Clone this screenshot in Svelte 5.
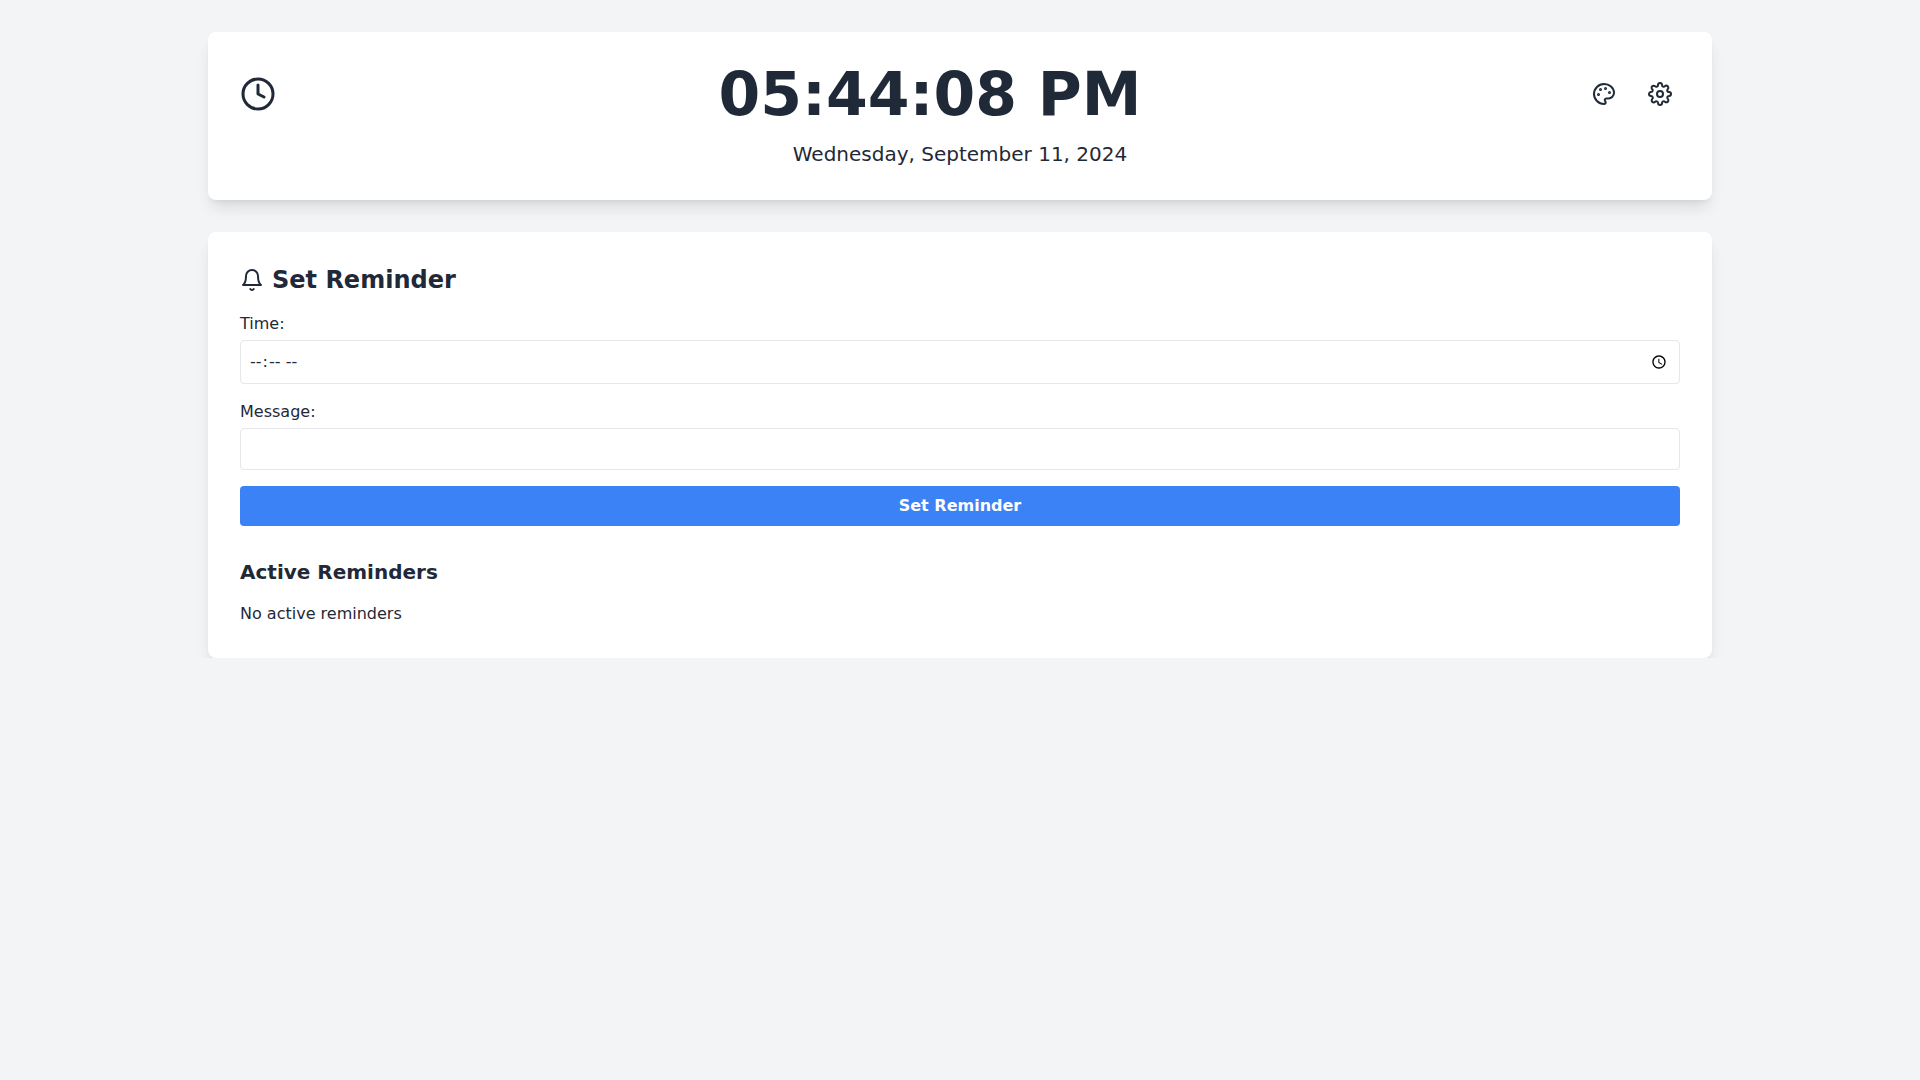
<script>
  let time = $state('');
  let message = $state('');
</script>

<div class="page">
  <section class="card">
    <div class="clock-row">
      <svg class="clock-icon" viewBox="0 0 24 24" fill="none" stroke="currentColor" stroke-width="2" stroke-linecap="round" stroke-linejoin="round"><circle cx="12" cy="12" r="10"/><polyline points="12 6 12 12 16 14"/></svg>
      <div class="time">05:44:08 PM</div>
      <div class="actions">
        <button class="icon-btn" aria-label="Theme">
          <svg viewBox="0 0 24 24" fill="none" stroke="currentColor" stroke-width="2" stroke-linecap="round" stroke-linejoin="round"><circle cx="13.5" cy="6.5" r=".5" fill="currentColor"/><circle cx="17.5" cy="10.5" r=".5" fill="currentColor"/><circle cx="8.5" cy="7.5" r=".5" fill="currentColor"/><circle cx="6.5" cy="12.5" r=".5" fill="currentColor"/><path d="M12 2C6.5 2 2 6.5 2 12s4.5 10 10 10c.926 0 1.648-.746 1.648-1.688 0-.437-.18-.835-.437-1.125-.29-.289-.438-.652-.438-1.125a1.64 1.64 0 0 1 1.668-1.668h1.996c3.051 0 5.555-2.503 5.555-5.554C21.965 6.012 17.461 2 12 2z"/></svg>
        </button>
        <button class="icon-btn" aria-label="Settings">
          <svg viewBox="0 0 24 24" fill="none" stroke="currentColor" stroke-width="2" stroke-linecap="round" stroke-linejoin="round"><circle cx="12" cy="12" r="3"/><path d="M19.4 15a1.65 1.65 0 0 0 .33 1.82l.06.06a2 2 0 0 1 0 2.83 2 2 0 0 1-2.83 0l-.06-.06a1.65 1.65 0 0 0-1.82-.33 1.65 1.65 0 0 0-1 1.51V21a2 2 0 0 1-2 2 2 2 0 0 1-2-2v-.09A1.65 1.65 0 0 0 9 19.4a1.65 1.65 0 0 0-1.82.33l-.06.06a2 2 0 0 1-2.83 0 2 2 0 0 1 0-2.83l.06-.06a1.65 1.65 0 0 0 .33-1.82 1.65 1.65 0 0 0-1.51-1H3a2 2 0 0 1-2-2 2 2 0 0 1 2-2h.09A1.65 1.65 0 0 0 4.6 9a1.65 1.65 0 0 0-.33-1.82l-.06-.06a2 2 0 0 1 0-2.83 2 2 0 0 1 2.83 0l.06.06a1.65 1.65 0 0 0 1.82.33H9a1.65 1.65 0 0 0 1-1.51V3a2 2 0 0 1 2-2 2 2 0 0 1 2 2v.09a1.65 1.65 0 0 0 1 1.51 1.65 1.65 0 0 0 1.82-.33l.06-.06a2 2 0 0 1 2.83 0 2 2 0 0 1 0 2.83l-.06.06a1.65 1.65 0 0 0-.33 1.82V9a1.65 1.65 0 0 0 1.51 1H21a2 2 0 0 1 2 2 2 2 0 0 1-2 2h-.09a1.65 1.65 0 0 0-1.51 1z"/></svg>
        </button>
      </div>
    </div>
    <p class="date">Wednesday, September 11, 2024</p>
  </section>

  <section class="card">
    <h2 class="heading">
      <svg viewBox="0 0 24 24" fill="none" stroke="currentColor" stroke-width="2" stroke-linecap="round" stroke-linejoin="round"><path d="M18 8A6 6 0 0 0 6 8c0 7-3 9-3 9h18s-3-2-3-9"/><path d="M13.73 21a2 2 0 0 1-3.46 0"/></svg>
      Set Reminder
    </h2>
    <form class="form" onsubmit={(e) => e.preventDefault()}>
      <div class="field">
        <label for="time">Time:</label>
        <input id="time" type="time" bind:value={time} />
      </div>
      <div class="field">
        <label for="message">Message:</label>
        <input id="message" type="text" bind:value={message} />
      </div>
      <button class="submit" type="submit">Set Reminder</button>
    </form>
    <h3 class="subheading">Active Reminders</h3>
    <p class="empty">No active reminders</p>
  </section>
</div>

<style>
  :global(body) {
    background: #f3f4f6;
    color: #1f2937;
    font-family: "DejaVu Sans", sans-serif;
    line-height: 1.5;
  }
  .page {
    max-width: 1504px;
    margin: 0 auto;
    padding-top: 32px;
    display: flex;
    flex-direction: column;
    gap: 32px;
  }
  .card {
    background: #fff;
    border-radius: 8px;
    padding: 32px;
    box-shadow: 0 10px 15px -3px rgba(0,0,0,.1), 0 4px 6px -4px rgba(0,0,0,.1);
  }
  .clock-row {
    display: flex;
    align-items: center;
    justify-content: space-between;
    margin-bottom: 16px;
  }
  .clock-icon { width: 36px; height: 36px; flex: none; display: block; }
  .time {
    font-size: 60px;
    line-height: 60px;
    font-weight: 700;
  }
  .actions { display: flex; gap: 16px; }
  .icon-btn {
    width: 40px; height: 40px;
    padding: 8px;
    border: 0;
    background: none;
    color: inherit;
    border-radius: 9999px;
  }
  .icon-btn svg { width: 24px; height: 24px; display: block; }
  .date {
    margin: 0;
    text-align: center;
    font-size: 20px;
    line-height: 28px;
  }
  .heading {
    margin: 0 0 16px;
    display: flex;
    align-items: center;
    gap: 8px;
    font-size: 24px;
    line-height: 32px;
    font-weight: 700;
  }
  .heading svg { width: 24px; height: 24px; }
  .form { display: flex; flex-direction: column; gap: 16px; }
  .field label {
    display: block;
    font-size: 16px;
    line-height: 24px;
    margin-bottom: 4px;
  }
  .field input {
    box-sizing: border-box;
    display: block;
    width: 100%;
    padding: 8px;
    border: 1px solid #e5e7eb;
    border-radius: 4px;
    background: #fff;
    font: inherit;
    color: inherit;
  }
  .submit {
    height: 40px;
    background: #3b82f6;
    color: #fff;
    border: 0;
    border-radius: 4px;
    font: 700 16px/24px "DejaVu Sans", sans-serif;
  }
  .subheading {
    margin: 32px 0 16px;
    font-size: 20px;
    line-height: 28px;
    font-weight: 700;
  }
  .empty { margin: 0; font-size: 16px; line-height: 24px; }
</style>
